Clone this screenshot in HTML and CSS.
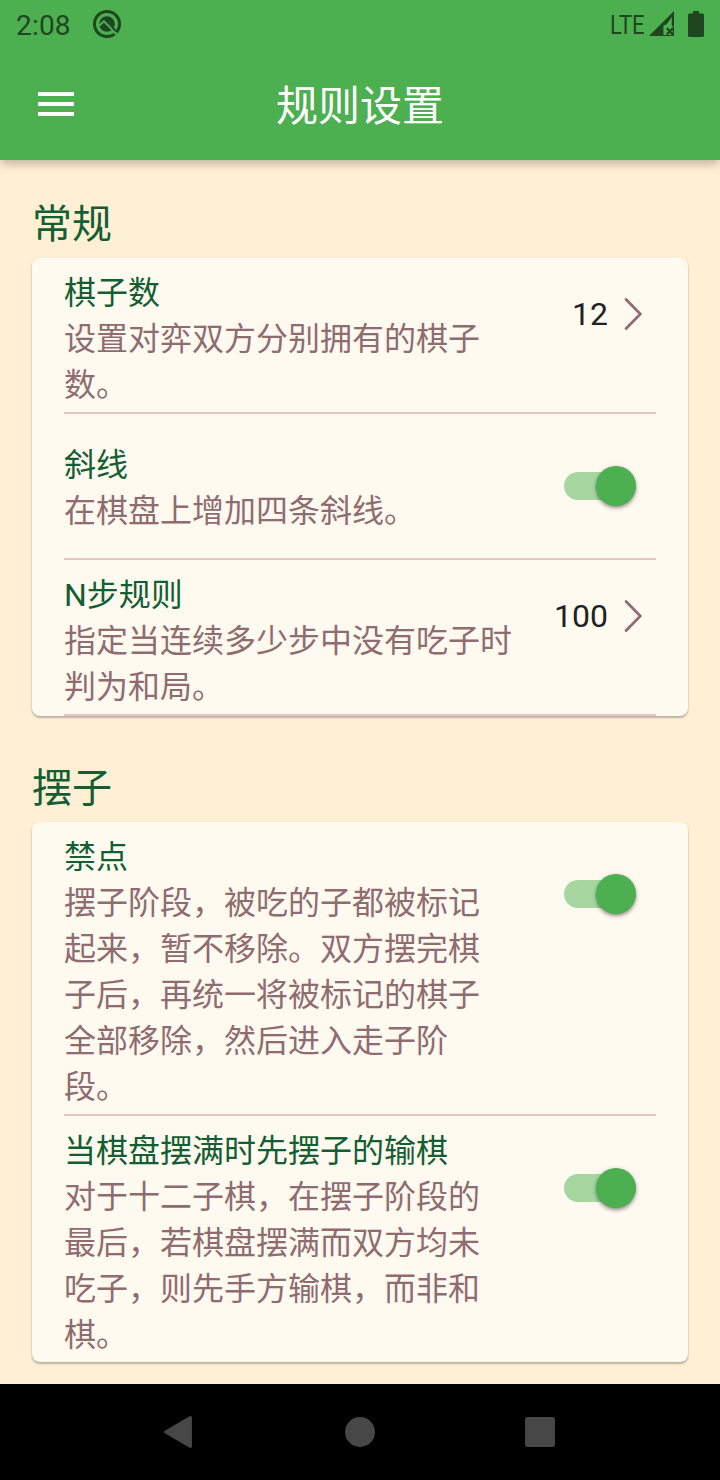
FILE: index.html
```html
<!DOCTYPE html>
<html lang="zh-CN">
<head>
<meta charset="utf-8">
<title>规则设置</title>
<link rel="stylesheet" href="styles.css">
</head>
<body>
<div class="screen">
  <header class="top">
    <div class="status">
      <span class="clock">2:08</span>
      <svg class="status-q" width="28" height="28" viewBox="0 0 28 28">
        <circle cx="14" cy="14" r="12.5" fill="none" stroke="#1f4620" stroke-width="3"/>
        <circle cx="14" cy="14" r="7.8" fill="#1f4620"/>
        <path d="M6 15.6 L11 11.4 L25.5 26" fill="none" stroke="#4caf50" stroke-width="2"/>
        <path d="M19.5 17.5 L23.4 21.6" stroke="#1f4620" stroke-width="2"/>
        <path d="M20.8 21.6 L23 23.9" stroke="#4caf50" stroke-width="2.4"/>
      </svg>
      <span class="spacer"></span>
      <span class="network">LTE</span>
      <svg class="signal" width="26" height="26" viewBox="0 0 26 26">
        <path d="M0 25 L25 0 V25 Z" fill="#1f4620"/>
        <path d="M14.4 14.3 L17.4 13.6 L22.8 6 V15 H24 V24 H14.4 Z" fill="#4caf50"/>
        <path d="M24.3 2 V25" stroke="#1f4620" stroke-width="1.2"/>
        <path d="M17.8 17.2 L23.8 23.4 M23.8 17.2 L17.8 23.4" stroke="#1f4620" stroke-width="2.2"/>
      </svg>
      <svg class="battery" width="16" height="26" viewBox="0 0 16 26">
        <path d="M5 0 H11 V2.6 H14.5 Q16 2.6 16 4.2 V24.4 Q16 26 14.5 26 H1.5 Q0 26 0 24.4 V4.2 Q0 2.6 1.5 2.6 H5 Z" fill="#1f4620"/>
      </svg>
    </div>
    <div class="appbar">
      <div class="menu"><i></i><i></i><i></i></div>
      <h1 class="title">规则设置</h1>
    </div>
  </header>

  <main class="content">
    <h2 class="section">常规</h2>
    <section class="card">
      <div class="item">
        <div class="text">
          <div class="name">棋子数</div>
          <div class="desc">设置对弈双方分别拥有的棋子数。</div>
        </div>
        <div class="value"><span>12</span>
          <svg width="18" height="34" viewBox="0 0 18 34"><path d="M2.1 2.4 L16.4 17 L2.1 31.6" fill="none" stroke="#8f6c70" stroke-width="2.8" stroke-linecap="round"/></svg>
        </div>
      </div>
      <div class="item single">
        <div class="text">
          <div class="name">斜线</div>
          <div class="desc">在棋盘上增加四条斜线。</div>
        </div>
        <div class="switch"><span class="thumb"></span></div>
      </div>
      <div class="item">
        <div class="text wide">
          <div class="name">N步规则</div>
          <div class="desc">指定当连续多少步中没有吃子时判为和局。</div>
        </div>
        <div class="value"><span>100</span>
          <svg width="18" height="34" viewBox="0 0 18 34"><path d="M2.1 2.4 L16.4 17 L2.1 31.6" fill="none" stroke="#8f6c70" stroke-width="2.8" stroke-linecap="round"/></svg>
        </div>
      </div>
    </section>

    <h2 class="section">摆子</h2>
    <section class="card">
      <div class="item">
        <div class="text">
          <div class="name">禁点</div>
          <div class="desc">摆子阶段，被吃的子都被标记起来，暂不移除。双方摆完棋子后，再统一将被标记的棋子全部移除，然后进入走子阶段。</div>
        </div>
        <div class="switch"><span class="thumb"></span></div>
      </div>
      <div class="item last">
        <div class="text">
          <div class="name">当棋盘摆满时先摆子的输棋</div>
          <div class="desc">对于十二子棋，在摆子阶段的最后，若棋盘摆满而双方均未吃子，则先手方输棋，而非和棋。</div>
        </div>
        <div class="switch"><span class="thumb"></span></div>
      </div>
    </section>
  </main>

  <nav class="navbar">
    <svg width="30" height="34" viewBox="0 0 30 34"><path d="M2.6 17 L27.4 2.6 V31.4 Z" fill="#474747" stroke="#474747" stroke-width="3" stroke-linejoin="round"/></svg>
    <span class="home"></span>
    <span class="recent"></span>
  </nav>
</div>
</body>
</html>
```
FILE: styles.css
```css
* { box-sizing: border-box; }
body {
  margin: 0;
  font-family: Roboto, "Noto Sans CJK SC", sans-serif;
}
.screen {
  display: flex;
  flex-direction: column;
  width: 720px;
  height: 1480px;
  background: #ffefd5;
  overflow: hidden;
}
.top {
  height: 160px;
  background: #4caf50;
  box-shadow: 0 4px 8px -2px rgba(0,0,0,.14), 0 8px 10px rgba(0,0,0,.06), 0 2px 10px rgba(0,0,0,.1);
}
.status {
  display: flex;
  align-items: center;
  height: 48px;
  padding: 0 16px;
  color: #1f4620;
}
.clock { font-size: 28px; line-height: 48px; padding-top: 4px; width: 54px; letter-spacing: .2px; white-space: nowrap; }
.status-q { margin-left: 23px; }
.spacer { flex: 1; }
.network { font-size: 25px; line-height: 48px; padding-top: 3px; width: 35px; margin-right: 4px; transform-origin: left; transform: scaleX(.88); white-space: nowrap; }
.signal { margin-right: 13px; }
.appbar {
  display: grid;
  grid-template-columns: 36px 1fr 36px;
  align-items: center;
  height: 112px;
  padding: 0 38px;
}
.menu { display: flex; flex-direction: column; gap: 6px; }
.menu i { height: 4px; background: #fff; }
.title {
  margin: 0;
  text-align: center;
  color: #fff;
  font-size: 42px;
  font-weight: 400;
  line-height: 60px;
  padding-top: 6px;
}
.content { flex: 1; padding: 32px 32px 0; }
.section {
  margin: 0;
  height: 58px;
  line-height: 58px;
  font-size: 40px;
  font-weight: 400;
  color: #145e33;
  padding-top: 4px;
}
.card + .section { margin-top: 40px; }
.section + .card { margin-top: 8px; }
.card {
  padding: 0 32px;
  border-radius: 8px;
  background: #fffaf0;
  box-shadow: 0 2px 2px rgba(0,0,0,.2), 0 1px 3px rgba(0,0,0,.13);
}
.item {
  display: flex;
  justify-content: space-between;
  padding: 12px 0 4px;
  border-bottom: 2px solid #e1c6c4;
}
.item.single { padding: 28px 0 24px; }
.item.last { border-bottom: 0; }
.text {
  width: 420px;
  font-size: 32px;
  line-height: 46px;
}
.text.wide { width: 452px; }
.name { color: #145e33; white-space: nowrap; }
.desc { color: #8f6c70; }
.value {
  display: flex;
  align-items: center;
  gap: 16px;
  height: 34px;
  margin: 27px 14px 0 0;
  font-size: 32px;
  color: #212121;
}
.switch {
  display: flex;
  justify-content: flex-end;
  align-items: center;
  width: 72px;
  height: 28px;
  margin: 46px 20px 0 0;
  border-radius: 14px;
  background: #a6d7a1;
}
.single .switch { margin-top: 30px; }
.thumb {
  flex: none;
  width: 40px;
  height: 40px;
  border-radius: 50%;
  background: #4caf50;
  box-shadow: 0 3px 4px -1px rgba(0,0,0,.3), 0 1px 4px rgba(0,0,0,.25);
}
.navbar {
  display: grid;
  grid-template-columns: 30px 30px 30px;
  align-items: center;
  height: 96px;
  padding: 0 165px 0 163px;
  justify-content: space-between;
  background: #000;
}
.home { width: 30px; height: 30px; border-radius: 50%; background: #474747; margin-left: 1px; }
.recent { width: 30px; height: 30px; border-radius: 3px; background: #474747; }
```
